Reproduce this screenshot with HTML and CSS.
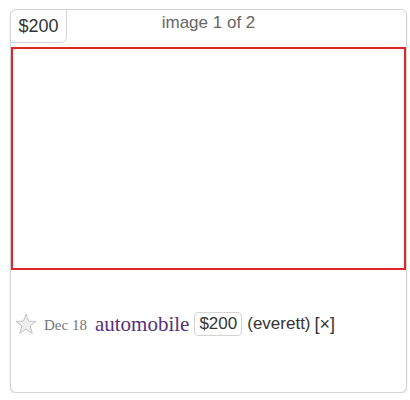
FILE: index.html
```html
<!DOCTYPE html>
<html>
<head>
<meta charset="utf-8">
<link rel="stylesheet" href="styles.css">
</head>
<body>
<div class="card">
  <div class="header">
    <span class="price-tag">$200</span>
    <span class="counter">image 1 of 2</span>
  </div>
  <div class="gallery"></div>
  <div class="result-row">
    <svg class="star" width="22" height="22" viewBox="0 0 22 22">
      <polygon points="11,1 13.6,8.2 21,8.4 15.1,13 17.3,20.5 11,16.1 4.7,20.5 6.9,13 1,8.4 8.4,8.2" fill="#eeeeee" stroke="#c4c4c4" stroke-width="1"/>
    </svg>
    <span class="date">Dec 18</span>
    <a class="title">automobile</a>
    <span class="price">$200</span>
    <span class="hood">(everett)</span>
    <span class="hide">[×]</span>
  </div>
</div>
</body>
</html>
```
FILE: styles.css
```css
html, body {
  margin: 0;
  padding: 0;
  background: #ffffff;
}
body {
  padding: 9px 0 0 10px;
}
.card {
  position: relative;
  width: 395px;
  height: 382px;
  border: 1px solid #d4d4d4;
  border-radius: 6px;
  box-shadow: 0 1px 2px rgba(0,0,0,0.12);
  background: #fff;
  display: flex;
  flex-direction: column;
  font-family: "Liberation Sans", Arial, sans-serif;
}
.header {
  height: 37px;
  text-align: center;
}
.counter {
  display: inline-block;
  padding-top: 3px;
  font-size: 17px;
  color: #666;
}
.price-tag {
  position: absolute;
  left: -1px;
  top: -1px;
  width: 55px;
  height: 32px;
  box-sizing: content-box;
  border: 1px solid #d4d4d4;
  border-radius: 6px 0 6px 0;
  font-size: 18px;
  line-height: 33px;
  color: #333;
  text-align: center;
  background: #fff;
}
.gallery {
  height: 219px;
  border: 2px solid #e0262b;
}
.result-row {
  display: flex;
  align-items: center;
  margin-top: 42px;
  padding-left: 4px;
  height: 24px;
  white-space: nowrap;
}
.star {
  display: block;
  margin-right: 7px;
}
.date {
  font-family: "Liberation Serif", "Times New Roman", serif;
  font-size: 15px;
  color: #777;
  margin-right: 8px;
  padding-top: 3px;
}
.title {
  font-family: "Liberation Serif", "Times New Roman", serif;
  font-size: 21px;
  color: #55307a;
  margin-right: 5px;
}
.price {
  font-size: 17px;
  color: #333;
  border: 1px solid #d4d4d4;
  border-radius: 4px;
  padding: 1px 4px;
  margin-right: 5px;
}
.hood {
  font-size: 17px;
  color: #333;
  margin-right: 4px;
}
.hide {
  font-size: 18px;
  color: #333;
}
```
